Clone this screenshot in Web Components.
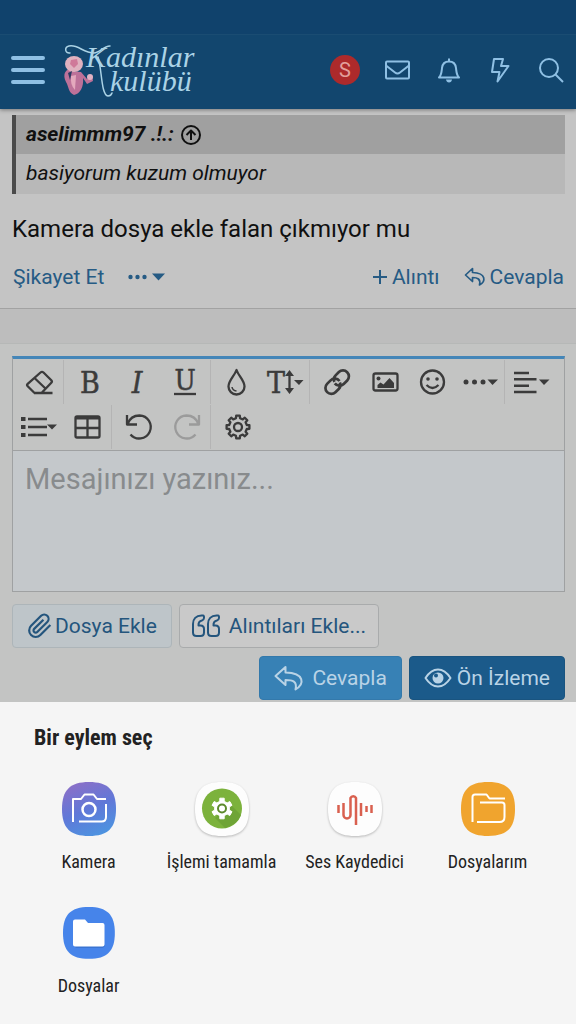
<!DOCTYPE html>
<html lang="tr">
<head>
<meta charset="utf-8">
<meta name="viewport" content="width=device-width, initial-scale=1">
<title>Kadınlar Kulübü</title>
<style>
    body {
        margin: 0;
        min-height: 100vh;
        display: flex;
        flex-direction: column;
        background-color: #c4c4c4;
        color: #101010;
        font-family: Roboto, "Liberation Sans", sans-serif;
        --link: #265b84;
        --line: #9fa1a2;
    }
    .post {
        padding: 6px 11px 15px 12px;
        border-bottom: 1px solid #a2a2a2;
    }
    .post p {
        margin: 0;
        padding: 19px 0 16px;
        font-size: 24px;
        line-height: 32px;
    }
    .spacer {
        height: 34px;
        background-color: #bdbdbd;
        border-bottom: 1px solid #b6b8b7;
    }
    .reply {
        padding: 12px 11px 2px 12px;
        background-color: #c3c4c3;
    }
    .row {
        display: flex;
        gap: 7px;
        margin-top: 12px;
    }
    .row.end {
        justify-content: flex-end;
        margin-top: 8px;
    }
    action-sheet {
        flex: 1;
    }
</style>
</head>
<body>
    <site-header></site-header>
    <main>
        <article class="post">
            <post-quote author="aselimmm97 .!.:">basiyorum kuzum olmuyor</post-quote>
            <p>Kamera dosya ekle falan çıkmıyor mu</p>
            <post-actions></post-actions>
        </article>
        <div class="spacer"></div>
        <section class="reply">
            <message-editor placeholder="Mesajınızı yazınız..."></message-editor>
            <div class="row">
                <form-button kind="attach" icon="clip">Dosya Ekle</form-button>
                <form-button kind="plain" icon="quotes">Alıntıları Ekle...</form-button>
            </div>
            <div class="row end">
                <form-button kind="primary" icon="reply">Cevapla</form-button>
                <form-button kind="dark" icon="eye">Ön İzleme</form-button>
            </div>
        </section>
    </main>
    <action-sheet heading="Bir eylem seç">
        <sheet-app icon="camera">Kamera</sheet-app>
        <sheet-app icon="android">İşlemi tamamla</sheet-app>
        <sheet-app icon="recorder">Ses Kaydedici</sheet-app>
        <sheet-app icon="myfiles">Dosyalarım</sheet-app>
        <sheet-app icon="files">Dosyalar</sheet-app>
    </action-sheet>

<script>
// Cog outline with flat teeth, first tooth pointing up
function cogPath(cx, cy, teeth, outer, inner) {
    const step = Math.PI * 2 / teeth
    const points = []
    for (let i = 0; i < teeth; i++) {
        const a = i * step - Math.PI / 2
        const corners = [[-0.29, inner], [-0.2, outer], [0.2, outer], [0.29, inner]]
        corners.forEach(([t, r]) => {
            points.push((cx + Math.cos(a + t * step) * r).toFixed(1) + ' ' + (cy + Math.sin(a + t * step) * r).toFixed(1))
        })
    }
    return 'M' + points.join('L') + 'Z'
}

const SQUIRCLE = 'M27 0C46 0 54 8 54 27S46 54 27 54S0 46 0 27S8 0 27 0Z'
const SERIF = 'font-family="DejaVu Serif Condensed, DejaVu Serif, serif" fill="currentColor" stroke-width="0.500" text-anchor="middle"'

// name: [width, height, markup]
const ICONS = {
    menu: [34, 30, '<path stroke-width="4" stroke-linecap="round" d="M2 3H32M2 15H32M2 27H32"/>'],
    mail: [26, 26, '<rect x="1" y="4.500" width="23" height="17" rx="1"/><path d="M1 8.500L10 15.500Q12.500 17.500 15 15.500L24 8.500"/>'],
    bell: [26, 26, '<path d="M3 20.500C5.500 18 5.500 15 6 11C6.500 6.500 9 4.500 13 4.500S19.500 6.500 20 11C20.500 15 20.500 18 23 20.500ZM13 1.500V4"/><path fill="currentColor" stroke="none" d="M10 22.500H16Q15.500 25.500 13 25.500T10 22.500Z"/>'],
    bolt: [26, 26, '<path d="M7 2H16L14 9H21.500L10.500 24.500L12.500 15H5Z"/>'],
    search: [26, 26, '<circle cx="11" cy="11" r="9"/><path d="M17.500 17.500L25 25"/>'],
    up: [20, 20, '<circle cx="10" cy="10" r="9"/><path d="M10 15V5.500M5.500 10L10 5.500L14.500 10"/>'],
    more: [38, 12, '<g fill="currentColor" stroke="none"><circle cx="2.500" cy="6" r="2.200"/><circle cx="9.500" cy="6" r="2.200"/><circle cx="16.500" cy="6" r="2.200"/><path d="M24 2.500H37L30.500 9.500Z"/></g>'],
    plus: [14, 14, '<path d="M7 0V14M0 7H14"/>'],
    replysmall: [22, 20, '<path stroke-width="1.700" d="M8.500 1.500L1.500 8L8.500 14.500V10.500C13.500 10.500 17 12 15.500 18C21.500 15 23 6 8.500 5.500Z"/>'],
    reply: [30, 26, '<path d="M11.500 2L1.500 11L11.500 20V15C18.500 15 23.500 16 21.500 24.500C30.500 19 31 8 11.500 7.500Z"/>'],
    eye: [28, 20, '<path d="M1.500 10Q7 1.500 14 1.500T26.500 10Q21 18.500 14 18.500T1.500 10Z"/><circle cx="14" cy="10" r="5.500" fill="currentColor" stroke="none"/><circle cx="12" cy="7.500" r="2" fill="#1b5a8a" stroke="none"/>'],
    clip: [26, 28, '<g transform="translate(0 1) scale(1.090)"><path d="M21.440 11.050l-9.190 9.190a6 6 0 0 1-8.490-8.490l9.190-9.190a4 4 0 0 1 5.660 5.660l-9.200 9.190a2 2 0 0 1-2.830-2.830l8.490-8.480"/></g>'],
    quotes: [29, 24, '<path d="M11 1.500H9.500C4 1.500 1 5 1 10V18.500Q1 22 4.500 22H8.500Q12 22 12 18.500V15Q12 11.500 8.500 11.500H6.500C6.300 8.500 7.500 7 10 6.500C12.500 6 12.500 1.500 11 1.500Z"/><path transform="translate(15 0)" d="M11 1.500H9.500C4 1.500 1 5 1 10V18.500Q1 22 4.500 22H8.500Q12 22 12 18.500V15Q12 11.500 8.500 11.500H6.500C6.300 8.500 7.500 7 10 6.500C12.500 6 12.500 1.500 11 1.500Z"/>'],

    eraser: [48, 32, '<path d="M20.500 27L13.700 20.200Q12.500 19 13.700 17.800L26.500 6.500Q28 5.200 29.500 6.500L37.300 14.300Q38.500 15.500 37.300 16.800L27.500 27M20 27H38.500M20.500 12L32 23"/>'],
    bold: [48, 32, `<text x="25" y="27" font-size="30" stroke="currentColor" ${SERIF}>B</text>`],
    italic: [48, 32, `<text x="24" y="27" font-size="30" font-style="italic" stroke="currentColor" ${SERIF}>I</text>`],
    underline: [48, 32, `<text x="24" y="24" font-size="28" stroke="currentColor" ${SERIF}>U</text><path d="M13 28H35"/>`],
    drop: [48, 32, '<path d="M24.500 4C22.500 10 16.500 14.500 16.500 20.500A8 8 0 0 0 32.500 20.500C32.500 14.500 26.500 10 24.500 4Z"/><path stroke-width="1.500" d="M20 21Q20.500 24.500 24.500 25"/>'],
    size: [48, 32, `<text x="16" y="27" font-size="30" stroke="currentColor" ${SERIF}>T</text><path d="M29.500 8V24"/><path fill="currentColor" stroke="none" d="M25 10L29.500 4L34 10ZM25 22L29.500 28L34 22ZM34 14H43.500L39 19Z"/>`],
    link: [48, 32, '<g transform="translate(12 2) scale(1.180)"><path d="M10 13a5 5 0 0 0 7.540.540l3-3a5 5 0 0 0-7.070-7.070l-2.800 2.800a5 5 0 0 0-1 5.500"/><path d="M14 11a5 5 0 0 0-7.540-.540l-3 3a5 5 0 0 0 7.070 7.070l2.800-2.800a5 5 0 0 0 1-5.500"/></g>'],
    image: [48, 32, '<rect x="14.500" y="7.500" width="24" height="17" rx="2"/><circle cx="19.500" cy="12.500" r="2" fill="currentColor" stroke="none"/><path fill="currentColor" stroke="none" d="M18.500 22V19L21.500 16.500L24.500 18.500L30.500 12L35 17V22Z"/>'],
    smile: [48, 32, '<circle cx="25.500" cy="16" r="11.500"/><path d="M19.500 19Q25.500 25 31.500 19"/><g fill="currentColor" stroke="none"><circle cx="21" cy="13" r="1.800"/><circle cx="30" cy="13" r="1.800"/></g>'],
    dots: [48, 32, '<g fill="currentColor" stroke="none"><circle cx="11" cy="16" r="2.500"/><circle cx="19.500" cy="16" r="2.500"/><circle cx="28" cy="16" r="2.500"/><path d="M32.500 13.500H43L37.500 19Z"/></g>'],
    align: [48, 32, '<path stroke-width="2.500" d="M8 7H23M8 13.300H30.500M8 19.700H23M8 26H30.500"/><path fill="currentColor" stroke="none" d="M33 13.500H43.500L38 19Z"/>'],
    list: [48, 32, '<path stroke-width="2.500" d="M14 8H33M14 16H33M14 24H33"/><path stroke-width="4" d="M7 8H11.500M7 16H11.500M7 24H11.500"/><path fill="currentColor" stroke="none" d="M33 13.500H43L38 18.500Z"/>'],
    table: [48, 32, '<rect x="13.500" y="5.500" width="24" height="21" rx="1.500"/><path d="M13 17H37.500M25.500 7V26"/><path stroke-width="3" d="M13.500 7H37.500"/>'],
    undo: [48, 32, '<path d="M14 4V13.500H24M14.500 13C17 6.500 22 4.500 26.500 4.500A11.500 11.500 0 1 1 17.500 23.500"/>'],
    redo: [48, 32, '<g transform="translate(52 0) scale(-1 1)"><path d="M14 4V13.500H24M14.500 13C17 6.500 22 4.500 26.500 4.500A11.500 11.500 0 1 0 35.500 23.500" visibility="hidden"/><path d="M14 4V13.500H24M14.500 13C17 6.500 22 4.500 26.500 4.500A11.500 11.500 0 1 1 17.500 23.500"/></g>'],
    cog: [48, 32, `<path d="${cogPath(26, 16, 8, 11.5, 9)}"/><circle cx="26" cy="16" r="4"/>`],

    camera: [54, 54, `<defs><linearGradient id="sky" x1="0.300" y1="0" x2="0.700" y2="1"><stop offset="0" stop-color="#8a70c8"/><stop offset="0.500" stop-color="#6078d8"/><stop offset="1" stop-color="#4c94e0"/></linearGradient></defs>
        <path fill="url(#sky)" stroke="none" d="${SQUIRCLE}"/>
        <path stroke="#fff" d="M11 40V17H19L22.500 12.500H31.500L35 17H44M44 22V35Q44 39.500 39.500 39.500H17"/><circle cx="27" cy="27.500" r="6.500" stroke="#fff" stroke-width="2.500"/>`],
    android: [54, 54, `<path class="card" d="${SQUIRCLE}"/><circle cx="27" cy="26.500" r="20" fill="#7cb23c" stroke="none"/>
        <path fill="#6fa436" stroke="none" d="M20 36L30 46Q42 43 46 33L35 22Z"/>
        <path fill="#fff" stroke="#fff" stroke-width="1" d="${cogPath(27, 26.5, 6, 10.5, 7.5)}"/><circle cx="27" cy="26.500" r="4" fill="#fff" stroke="#5d8a2c" stroke-width="2"/>`],
    recorder: [54, 54, `<path class="card" d="${SQUIRCLE}"/>
        <path stroke="#d9604f" stroke-width="2.500" d="M10.500 23V31M15.500 21V33A3.500 3.500 0 0 0 22.500 33V16A3 3 0 0 1 28 16V43M33 21V34M38.500 24V30M43.500 23V31"/>`],
    myfiles: [54, 54, `<path fill="#f0a42e" stroke="none" d="${SQUIRCLE}"/>
        <path stroke="#fff" d="M11.500 40V15Q11.500 12.500 14 12.500H25.500L28.500 16.500H44M19 20.500H41Q43.500 20.500 43.500 23V35Q43.500 40 38.500 40H16"/>`],
    files: [54, 54, `<path fill="#4684ea" stroke="none" transform="translate(1 1) scale(0.960)" d="${SQUIRCLE}"/>
        <path fill="#3a74d2" stroke="none" d="M12 40H41Q43 40 43 38V40L41 42H14Z"/>
        <path fill="#fff" stroke="none" d="M11 15.500Q11 13.500 13 13.500H23L26 17H40.500Q42.500 17 42.500 19V38.500Q42.500 40.500 40.500 40.500H13Q11 40.500 11 38.500Z"/>`]
}

class AppIcon extends HTMLElement {
    constructor() {
        super()
        this.attachShadow({ mode: 'open' })
    }

    connectedCallback() {
        const [width, height, markup] = ICONS[this.getAttribute('name')]
        this.shadowRoot.innerHTML = `
      <style>
        :host { display: inline-flex; flex: none; }
        svg { display: block; overflow: visible; stroke-width: var(--stroke, 2); }
        .card {
          fill: #fdfdfd;
          stroke: none;
          filter: drop-shadow(0 1px 1px rgba(0, 0, 0, 0.25));
        }
      </style>
      <svg width="${width}" height="${height}" viewBox="0 0 ${width} ${height}" fill="none" stroke="currentColor" stroke-linejoin="round" aria-hidden="true">${markup}</svg>
    `
    }
}

class SiteHeader extends HTMLElement {
    constructor() {
        super()
        this.attachShadow({ mode: 'open' })
        this.shadowRoot.innerHTML = `
      <style>
        :host {
          display: block;
          background-color: #12466e;
          color: #8fc0e4;
          box-shadow: 0 1px 4px rgba(0, 0, 0, 0.4);
        }
        .status {
          height: 34px;
          background-color: #10426c;
          border-bottom: 1px solid #1a4c72;
        }
        nav {
          display: flex;
          align-items: center;
          height: 70px;
          padding: 0 0 4px 11px;
        }
        button {
          display: flex;
          justify-content: center;
          padding: 0;
          border: 0;
          background: none;
          color: inherit;
          cursor: pointer;
        }
        .logo { margin-left: 18px; margin-right: auto; }
        .logo svg { display: block; overflow: visible; }
        .tool { width: 51px; }
        .avatar {
          width: 30px;
          height: 30px;
          margin-right: 12px;
          align-items: center;
          border-radius: 50%;
          background-color: #ad2a2b;
          color: #e3a09c;
          font: 20px Roboto, sans-serif;
        }
      </style>
      <div class="status"></div>
      <nav>
        <button aria-label="Menü"><app-icon name="menu"></app-icon></button>
        <a class="logo" href="#" aria-label="Kadınlar kulübü">
          <svg width="136" height="56" viewBox="0 0 136 56" fill="none">
            <text fill="#abd3e6" font-family="Liberation Serif, serif" font-style="italic" font-size="30"><tspan x="23" y="25">Kadınlar</tspan> <tspan x="47" y="49">kulübü</tspan></text>
            <g stroke="#abd3e6" stroke-width="1.500" stroke-linecap="round">
              <path d="M7 11C2 12 1 5 6 4C15 2 20 11 31 11C37 11 40 4 47 4"/>
              <path d="M35 15C39 27 38 53 45 54Q48 54 49 51"/>
            </g>
            <path fill="#bd7199" d="M3 40C-2 30 6 25 9 29L18 30L24 37L29 33L30 39L24 42L20 36C21 45 17 52 11 53C5 50 6 45 3 40Z"/>
            <ellipse cx="11" cy="22" rx="9" ry="8" fill="#dfb1bf"/>
            <path fill="#cf7999" d="M8 18L14 17L15 22L11 26L7 22Z"/>
            <path fill="#e4a8bd" d="M8 34L13 33L12 48Q7 43 8 34Z"/>
            <path fill="#2b3c63" d="M5 31L9 29L7 38Z"/>
            <circle cx="27" cy="35" r="3" fill="#e1b2c3"/>
          </svg>
        </a>
        <button class="avatar">S</button>
        <button class="tool" aria-label="Mesajlar"><app-icon name="mail"></app-icon></button>
        <button class="tool" aria-label="Bildirimler"><app-icon name="bell"></app-icon></button>
        <button class="tool" aria-label="Yenilikler"><app-icon name="bolt"></app-icon></button>
        <button class="tool" aria-label="Ara"><app-icon name="search"></app-icon></button>
      </nav>
    `
    }
}

class PostQuote extends HTMLElement {
    constructor() {
        super()
        this.attachShadow({ mode: 'open' })
    }

    connectedCallback() {
        this.shadowRoot.innerHTML = `
      <style>
        :host {
          display: block;
          border-left: 4px solid #4a4a4a;
          background-color: #b8b8b8;
          font-size: 21px;
          font-style: italic;
          line-height: 39px;
        }
        a {
          display: flex;
          align-items: center;
          gap: 7px;
          padding: 0 10px;
          background-color: #a0a0a0;
          color: inherit;
          font-weight: bold;
          text-decoration: none;
        }
        div { padding: 0 10px 1px; }
      </style>
      <a href="#">${this.getAttribute('author')}<app-icon name="up"></app-icon></a>
      <div><slot></slot></div>
    `
    }
}

class PostActions extends HTMLElement {
    constructor() {
        super()
        this.attachShadow({ mode: 'open' })
        this.shadowRoot.innerHTML = `
      <style>
        :host {
          display: flex;
          align-items: center;
          gap: 24px;
          padding: 0 1px;
          font-size: 21px;
          line-height: 32px;
        }
        a {
          display: flex;
          align-items: center;
          gap: 5px;
          color: var(--link);
          text-decoration: none;
        }
        .more { margin-right: auto; }
        .reply { gap: 4px; }
      </style>
      <a href="#">Şikayet Et</a>
      <a class="more" href="#" aria-label="Daha fazla"><app-icon name="more"></app-icon></a>
      <a href="#"><app-icon name="plus"></app-icon>Alıntı</a>
      <a class="reply" href="#"><app-icon name="replysmall"></app-icon>Cevapla</a>
    `
    }
}

class ToolGroup extends HTMLElement {
    constructor() {
        super()
        this.attachShadow({ mode: 'open' })
    }

    connectedCallback() {
        const tools = this.getAttribute('tools').split(' ')
        this.shadowRoot.innerHTML = `
      <style>
        :host {
          display: flex;
          padding: 0 1px;
          border-right: 1px solid #b4b4b4;
          --stroke: 2.3;
        }
        :host([last]) { border-color: transparent; }
        button {
          display: flex;
          align-items: center;
          width: 48px;
          height: 44px;
          padding: 0;
          border: 0;
          background: none;
          color: #3b3b3b;
          cursor: pointer;
        }
        button:disabled { color: #9b9b9b; }
      </style>
      ${tools.map(t => `<button aria-label="${t}" ${t === 'redo' ? 'disabled' : ''}><app-icon name="${t}"></app-icon></button>`).join('')}
    `
    }
}

class MessageEditor extends HTMLElement {
    constructor() {
        super()
        this.attachShadow({ mode: 'open' })
    }

    connectedCallback() {
        const placeholder = this.getAttribute('placeholder')
        this.shadowRoot.innerHTML = `
      <style>
        :host {
          display: block;
          border: 1px solid var(--line);
          border-top: 3px solid #4486b8;
        }
        .toolbar {
          display: flex;
          flex-wrap: wrap;
          row-gap: 1px;
          padding: 1px 0;
          border-bottom: 1px solid var(--line);
        }
        textarea {
          display: block;
          box-sizing: border-box;
          width: 100%;
          height: 140px;
          padding: 10px 12px;
          border: 0;
          outline: 0;
          resize: none;
          background-color: #c4c8cb;
          font: 29px/36px Roboto, sans-serif;
        }
        textarea::placeholder { color: #888b8d; opacity: 1; }
      </style>
      <div class="toolbar">
        <tool-group tools="eraser"></tool-group>
        <tool-group tools="bold italic underline"></tool-group>
        <tool-group tools="drop size"></tool-group>
        <tool-group tools="link image smile dots"></tool-group>
        <tool-group tools="align" last></tool-group>
        <tool-group tools="list table"></tool-group>
        <tool-group tools="undo redo"></tool-group>
        <tool-group tools="cog" last></tool-group>
      </div>
      <textarea aria-label="Mesaj" placeholder="${placeholder}"></textarea>
    `
    }
}

class FormButton extends HTMLElement {
    constructor() {
        super()
        this.attachShadow({ mode: 'open' })
    }

    connectedCallback() {
        this.shadowRoot.innerHTML = `
      <style>
        :host { display: block; }
        button {
          display: flex;
          align-items: center;
          gap: 8px;
          height: 44px;
          padding: 0 14px;
          border: 1px solid #a9abac;
          border-radius: 4px;
          background-color: #c9c9c9;
          color: #24557d;
          font: 21px Roboto, sans-serif;
          cursor: pointer;
        }
        :host([kind="plain"]) button { padding: 0 12px; }
        :host([kind="attach"]) button { gap: 2px; background-color: #bec5c9; border-color: #adb5b9; }
        :host([kind="primary"]) button { background-color: #3781b5; border-color: #3379ab; color: #b9d3e6; }
        :host([kind="dark"]) button { gap: 5px; background-color: #1b5a8a; border-color: #195480; color: #b9d3e6; }
      </style>
      <button><app-icon name="${this.getAttribute('icon')}"></app-icon><slot></slot></button>
    `
    }
}

class ActionSheet extends HTMLElement {
    constructor() {
        super()
        this.attachShadow({ mode: 'open' })
    }

    connectedCallback() {
        this.shadowRoot.innerHTML = `
      <style>
        :host {
          display: block;
          padding: 20px 22px 24px;
          background-color: #f5f5f5;
          color: #222;
          font-family: "Roboto Condensed", "Liberation Sans Narrow", Roboto, sans-serif;
        }
        h2 {
          margin: 0 12px 28px;
          font-size: 22px;
          line-height: 32px;
        }
        .apps {
          display: grid;
          grid-template-columns: repeat(4, 1fr);
          row-gap: 32px;
        }
      </style>
      <h2>${this.getAttribute('heading')}</h2>
      <div class="apps"><slot></slot></div>
    `
    }
}

class SheetApp extends HTMLElement {
    constructor() {
        super()
        this.attachShadow({ mode: 'open' })
    }

    connectedCallback() {
        this.shadowRoot.innerHTML = `
      <style>
        :host { display: block; }
        button {
          display: flex;
          flex-direction: column;
          align-items: center;
          gap: 14px;
          width: 100%;
          padding: 0;
          border: 0;
          background: none;
          color: inherit;
          font-family: inherit;
          font-size: 18px;
          line-height: 24px;
          white-space: nowrap;
          cursor: pointer;
        }
      </style>
      <button><app-icon name="${this.getAttribute('icon')}"></app-icon><slot></slot></button>
    `
    }
}

customElements.define('app-icon', AppIcon)
customElements.define('site-header', SiteHeader)
customElements.define('post-quote', PostQuote)
customElements.define('post-actions', PostActions)
customElements.define('tool-group', ToolGroup)
customElements.define('message-editor', MessageEditor)
customElements.define('form-button', FormButton)
customElements.define('action-sheet', ActionSheet)
customElements.define('sheet-app', SheetApp)
</script>
</body>
</html>
